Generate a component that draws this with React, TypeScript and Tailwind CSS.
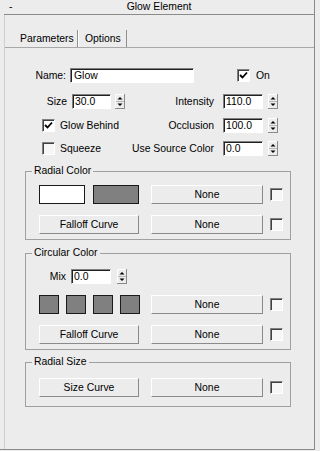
import React from "react";

function Spinner({ className = "" }: { className?: string }) {
  return (
    <svg className={className} width="10" height="15" viewBox="0 0 10 15">
      <rect x="0" y="0" width="10" height="15" fill="#ececec" />
      <line x1="0.5" y1="0" x2="0.5" y2="15" stroke="#ffffff" />
      <line x1="0" y1="0.5" x2="10" y2="0.5" stroke="#ffffff" />
      <line x1="9.5" y1="0" x2="9.5" y2="15" stroke="#8a8a8a" />
      <line x1="0" y1="14.5" x2="10" y2="14.5" stroke="#8a8a8a" />
      <line x1="1" y1="7.5" x2="9" y2="7.5" stroke="#b8b8b8" />
      <polygon points="2.5,5.5 7.5,5.5 5,3" fill="#000" />
      <polygon points="2.5,9.5 7.5,9.5 5,12" fill="#000" />
    </svg>
  );
}

function Check({ checked = false, className = "" }: { checked?: boolean; className?: string }) {
  return (
    <div
      className={
        "w-[13px] h-[13px] shrink-0 border border-t-[#808080] border-l-[#808080] border-b-white border-r-white shadow-[inset_1px_1px_0_#404040] flex items-center justify-center " +
        (checked ? "bg-white " : "bg-[#f6f6f6] ") +
        className
      }
    >
      {checked && (
        <svg width="9" height="9" viewBox="0 0 9 9">
          <polyline points="1,4 3.5,6.5 8,1.5" fill="none" stroke="#000" strokeWidth="1.8" />
        </svg>
      )}
    </div>
  );
}

function Input({ value, className = "" }: { value: string; className?: string }) {
  return (
    <div
      className={
        "h-[15px] shrink-0 bg-white border border-t-[#808080] border-l-[#808080] border-b-white border-r-white shadow-[inset_1px_1px_0_#202020] pl-[2px] flex items-center " +
        className
      }
    >
      {value}
    </div>
  );
}

function Button({ label, className = "" }: { label: string; className?: string }) {
  return (
    <div
      className={
        "h-[19px] shrink-0 bg-[#ececec] border border-t-white border-l-white border-b-[#8a8a8a] border-r-[#8a8a8a] flex items-center justify-center " +
        className
      }
    >
      {label}
    </div>
  );
}

function Swatch({ color, className = "" }: { color: string; className?: string }) {
  return (
    <div
      className={"h-[19px] shrink-0 border border-[#1a1a1a] " + className}
      style={{ backgroundColor: color }}
    />
  );
}

function Group({
  title,
  className = "",
  children,
}: {
  title: string;
  className?: string;
  children: React.ReactNode;
}) {
  return (
    <div className={"relative ml-[20px] w-[266px] border border-[#a0a0a0] pl-[13px] " + className}>
      <div className="absolute left-[6px] top-[-7px] px-[2px] bg-[#ececec] leading-[12px]">{title}</div>
      {children}
    </div>
  );
}

export default function App() {
  return (
    <div className="w-[320px] h-[451px] bg-[#ececec] text-black font-['Liberation_Sans',Arial,sans-serif] text-[10.4px] leading-[12px] overflow-hidden">
      <div className="w-[315px] h-[450px] border-r border-b border-[#8a8a8a] flex flex-col">
        {/* Title bar */}
        <div className="ml-[4px] h-[15px] shrink-0 border-b border-[#8a8a8a] grid grid-cols-[20px_1fr_20px] items-center">
          <span className="pl-[5px]">-</span>
          <span className="text-center">Glow Element</span>
          <span />
        </div>

        {/* Body */}
        <div className="ml-[4px] flex-1 border-l border-[#cfcfcf] flex flex-col">
          {/* Tabs */}
          <div className="mt-[15px] h-[18px] shrink-0 border-b border-[#a8a8a8] flex items-stretch pl-[9px]">
            <div className="w-[64px] pl-[6px] flex items-center border-r border-[#909090]">Parameters</div>
            <div className="w-[49px] pl-[6px] flex items-center border-l border-white border-r border-r-[#909090]">
              Options
            </div>
          </div>

          {/* Name row */}
          <div className="mt-[20px] h-[15px] flex items-center">
            <div className="w-[61px] text-right">Name:</div>
            <Input value="Glow" className="ml-[4px] w-[124px] pl-[3px]" />
            <Check checked className="ml-[43px]" />
            <span className="ml-[6px]">On</span>
          </div>

          {/* Size / Intensity */}
          <div className="mt-[11px] h-[15px] flex items-center">
            <div className="w-[62px] text-right">Size</div>
            <Input value="30.0" className="ml-[5px] w-[39px]" />
            <Spinner className="ml-[4px] shrink-0" />
            <div className="w-[89px] text-right">Intensity</div>
            <Input value="110.0" className="ml-[9px] w-[40px]" />
            <Spinner className="ml-[5px] shrink-0" />
          </div>

          {/* Glow Behind / Occlusion */}
          <div className="mt-[9px] h-[15px] flex items-center">
            <div className="w-[120px] flex items-center pl-[37px]">
              <Check checked />
              <span className="ml-[5px]">Glow Behind</span>
            </div>
            <div className="w-[89px] text-right">Occlusion</div>
            <Input value="100.0" className="ml-[9px] w-[40px]" />
            <Spinner className="ml-[5px] shrink-0" />
          </div>

          {/* Squeeze / Use Source Color */}
          <div className="mt-[8px] h-[15px] flex items-center">
            <div className="w-[120px] flex items-center pl-[37px]">
              <Check />
              <span className="ml-[5px]">Squeeze</span>
            </div>
            <div className="w-[89px] text-right whitespace-nowrap">Use Source Color</div>
            <Input value="0.0" className="ml-[9px] w-[40px]" />
            <Spinner className="ml-[5px] shrink-0" />
          </div>

          {/* Radial Color */}
          <Group title="Radial Color" className="mt-[15px] pt-[13px] pb-[5px]">
            <div className="h-[19px] flex items-center">
              <div className="w-[100px] flex gap-[8px]">
                <Swatch color="#ffffff" className="w-[46px]" />
                <Swatch color="#808080" className="w-[46px]" />
              </div>
              <Button label="None" className="ml-[12px] w-[112px]" />
              <Check className="ml-[7px]" />
            </div>
            <div className="mt-[11px] h-[19px] flex items-center">
              <Button label="Falloff Curve" className="w-[100px]" />
              <Button label="None" className="ml-[12px] w-[112px]" />
              <Check className="ml-[7px]" />
            </div>
          </Group>

          {/* Circular Color */}
          <Group title="Circular Color" className="mt-[13px] pt-[15px] pb-[5px]">
            <div className="h-[15px] flex items-center">
              <div className="w-[27px] text-right">Mix</div>
              <Input value="0.0" className="ml-[5px] w-[40px]" />
              <Spinner className="ml-[6px] shrink-0" />
            </div>
            <div className="mt-[11px] h-[19px] flex items-center">
              <div className="w-[101px] flex gap-[7px]">
                <Swatch color="#808080" className="w-[20px]" />
                <Swatch color="#808080" className="w-[20px]" />
                <Swatch color="#808080" className="w-[20px]" />
                <Swatch color="#808080" className="w-[20px]" />
              </div>
              <Button label="None" className="ml-[11px] w-[112px]" />
              <Check className="ml-[7px]" />
            </div>
            <div className="mt-[11px] h-[19px] flex items-center">
              <Button label="Falloff Curve" className="w-[100px]" />
              <Button label="None" className="ml-[12px] w-[112px]" />
              <Check className="ml-[7px]" />
            </div>
          </Group>

          {/* Radial Size */}
          <Group title="Radial Size" className="mt-[12px] pt-[15px] pb-[9px]">
            <div className="h-[19px] flex items-center">
              <Button label="Size Curve" className="w-[100px]" />
              <Button label="None" className="ml-[12px] w-[112px]" />
              <Check className="ml-[7px]" />
            </div>
          </Group>
        </div>
      </div>
    </div>
  );
}
